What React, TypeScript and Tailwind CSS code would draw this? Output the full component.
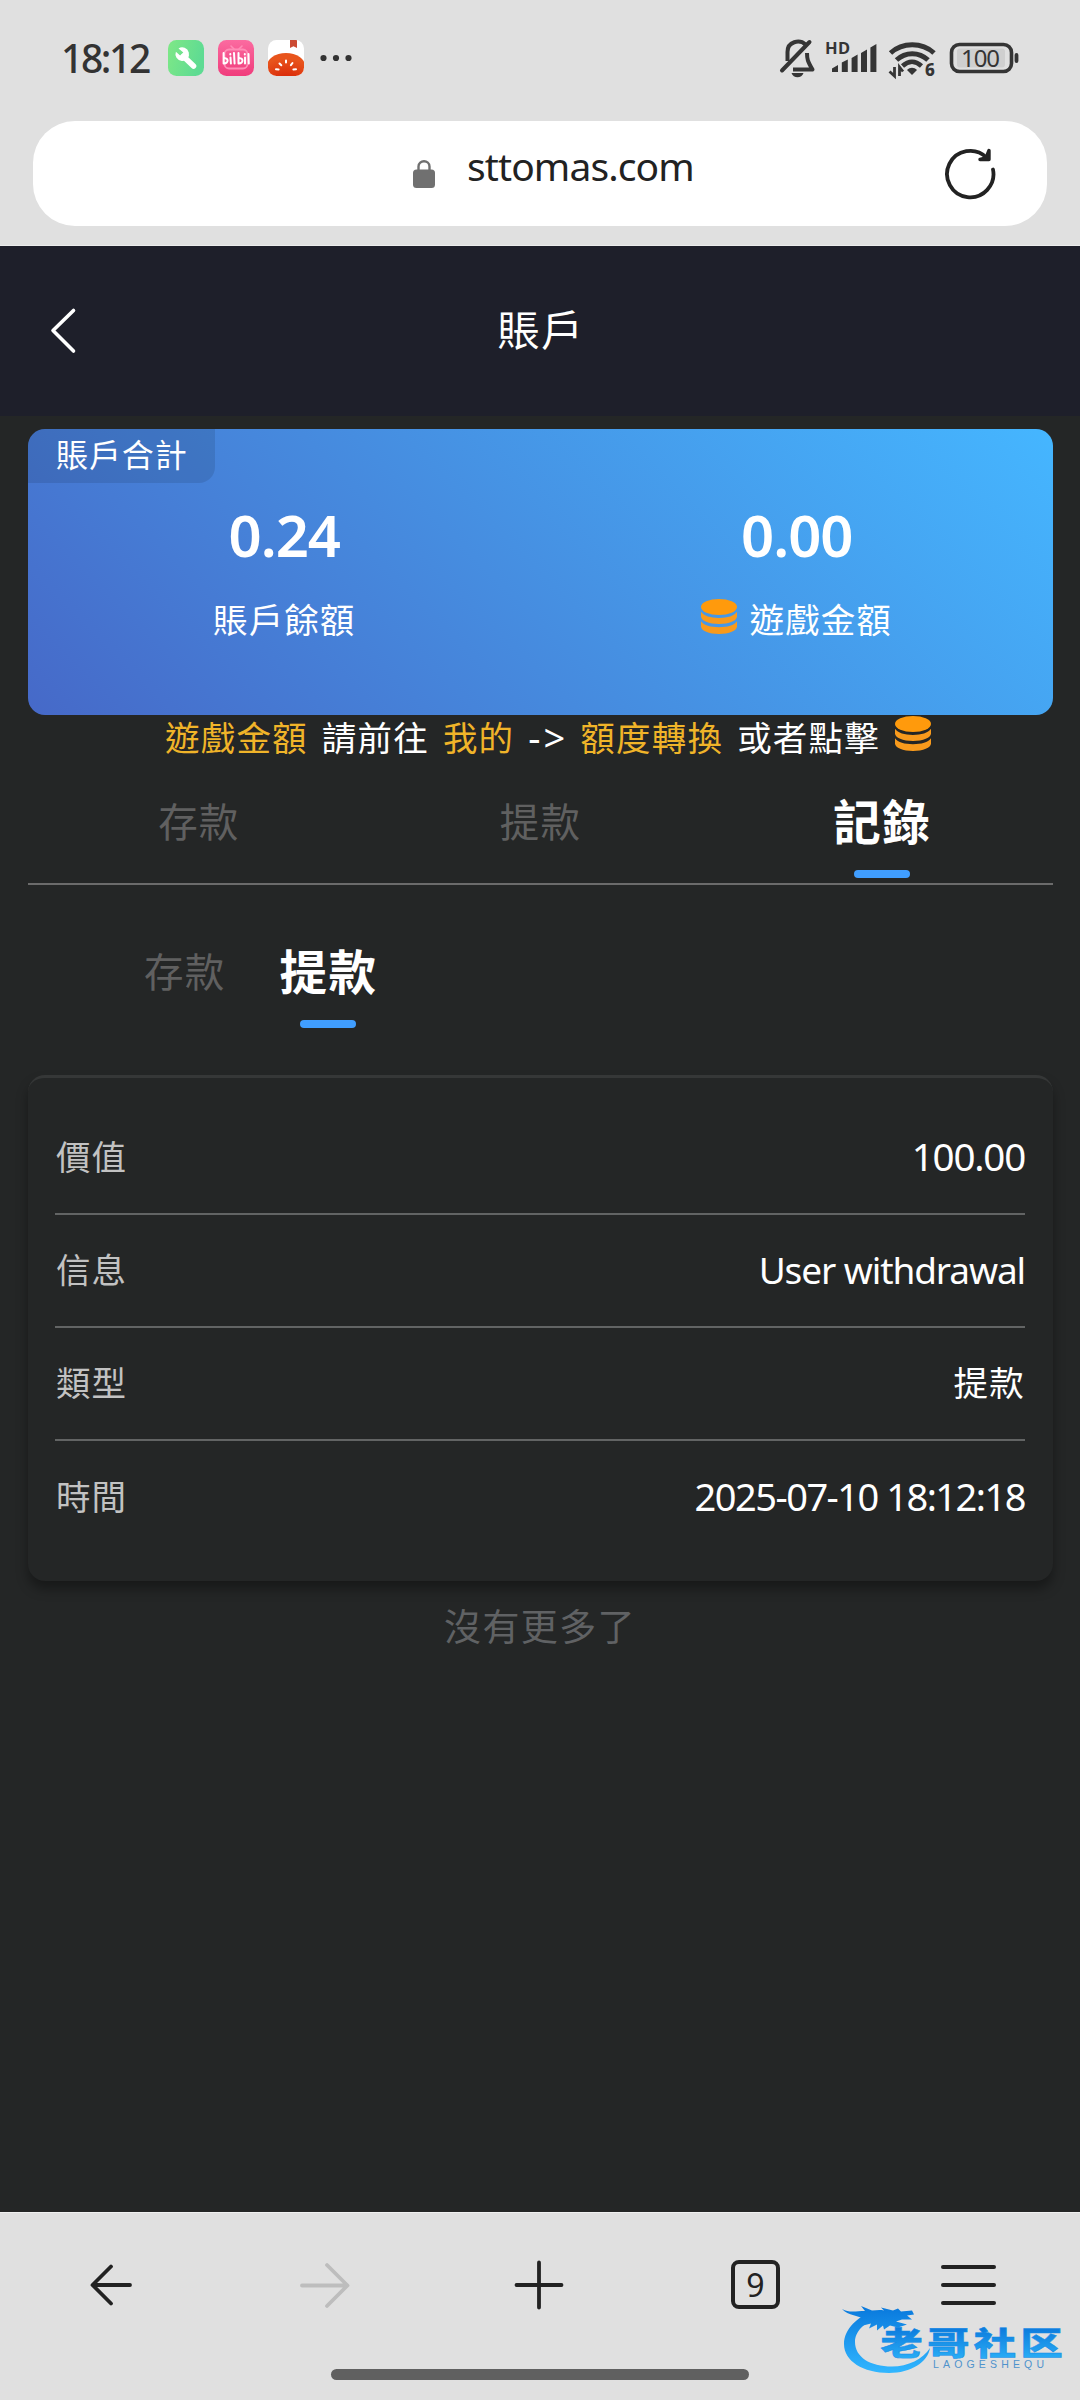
import React from "react";

const records = [
  { label: "價值", value: "100.00", style: "tracking-[-1.2px] text-[38.5px]" },
  { label: "信息", value: "User withdrawal", style: "tracking-[-1.1px] text-[37px]" },
  { label: "類型", value: "提款", style: "tracking-[1.2px] text-[34.5px]" },
  { label: "時間", value: "2025-07-10 18:12:18", style: "tracking-[-1.5px] text-[38px]" },
];

function Coins({ className = "" }: { className?: string }) {
  return (
    <svg className={className} width="38" height="38" viewBox="0 0 38 38" fill="#ff9a0c">
      <ellipse cx="19" cy="9" rx="18" ry="8" />
      <path d="M1 13.800c3 4.200 9.500 6.200 18 6.200s15-2 18-6.200v4.700c0 4.200-8 7.500-18 7.500S1 22.700 1 18.500z" fill="#f89a1c" />
      <path d="M1 23.300c3 4.200 9.500 5.900 18 5.900s15-1.700 18-5.900v5.200c0 4.200-8 7.500-18 7.500S1 32.700 1 28.500z" fill="#f89a1c" />
    </svg>
  );
}

function StatusBar() {
  return (
    <div className="flex h-[121px] items-start pt-[36px] pl-[61px] pr-[61px] text-[#333]">
      <span className="w-[107px] text-[39px] leading-[44px] font-medium tracking-[-2.400px] whitespace-nowrap">18:12</span>
      <svg className="mt-[4px] shrink-0" width="186" height="36" viewBox="0 0 186 36">
        <defs>
          <linearGradient id="green" x1="0" x2="1" y1="0" y2="0.3">
            <stop offset="0" stopColor="#7fe886" />
            <stop offset="1" stopColor="#5edb93" />
          </linearGradient>
          <linearGradient id="pink" x1="0" x2="0" y1="0" y2="1">
            <stop offset="0" stopColor="#fb6ba0" />
            <stop offset="1" stopColor="#f03c7c" />
          </linearGradient>
          <radialGradient id="tomato" cx="0.5" cy="1" r="0.8">
            <stop offset="0" stopColor="#d62005" />
            <stop offset="1" stopColor="#e8541c" />
          </radialGradient>
          <clipPath id="tomatoClip">
            <rect x="100" width="36" height="36" rx="8.500" />
          </clipPath>
        </defs>
        <rect width="36" height="36" rx="8.500" fill="url(#green)" />
        <path d="M15.500 16.500 25.500 26" stroke="#fff" strokeWidth="5.600" strokeLinecap="round" />
        <path d="M10.500 8.500a6.800 6.800 0 1 1-2.600 3.200l4.200 3.800 3.200-3z" fill="#fff" />
        <rect x="50" width="36" height="36" rx="8.500" fill="url(#pink)" />
        <rect x="56.500" y="9.500" width="23" height="19" rx="4.500" fill="none" stroke="#ff8db6" strokeWidth="1.800" />
        <path d="m63 6 3 3m8-3-3 3" stroke="#ff8db6" strokeWidth="1.600" strokeLinecap="round" />
        <g stroke="#fff" strokeWidth="2" fill="none" strokeLinecap="round">
          <path d="M55.600 13v10.500M55.600 18.500c5-1.500 5.500 4.800.3 5M62.500 17.500l.4 6M66 13l.6 10.500M70.500 13v10.500M70.500 18.500c5-1.500 5.500 4.800.3 5M77 17.500v6M80.500 14l.3 9.500" />
          <path d="M62.300 14v.4M76.800 14v.4" />
        </g>
        <g clipPath="url(#tomatoClip)">
          <rect x="100" width="36" height="36" fill="#fff" />
          <ellipse cx="118" cy="27" rx="19.500" ry="14" fill="url(#tomato)" />
          <path d="M122 0h7v8l-3.500-1.800L122 8z" fill="#cc4a33" />
          <g stroke="#fff" strokeWidth="2" strokeLinecap="round">
            <path d="m108 29.300 2.600.2M111.500 23.500l1.800 1.800M118 20.500v2M124.500 23l-1.600 2.200M128 29.300l-2.600.2" />
          </g>
        </g>
        <g fill="#333">
          <circle cx="155.500" cy="18" r="3.100" />
          <circle cx="168" cy="18" r="3.100" />
          <circle cx="180.500" cy="18" r="3.100" />
        </g>
      </svg>
      <svg className="mt-[-6px] ml-auto shrink-0" width="240" height="56" viewBox="779 30 240 56" fill="none" stroke="#353535">
        <path d="M782 70.500 809.500 42" strokeWidth="4" strokeLinecap="round" />
        <path d="M787.500 61V52c0-10.500 12-13 18-7.500M807 53c0 6 .5 8 5.500 16.500H793" strokeWidth="4" strokeLinejoin="round" />
        <path d="M791.500 73h12c-1.500 5.600-10.500 5.600-12 0z" fill="#353535" stroke="none" />
        <text x="825" y="54" fontSize="16.500" fontWeight="700" fill="#353535" stroke="none" textLength="25">HD</text>
        <path d="M832 72v-3.500l6-3.500V72zM841.800 72V62.500l6-3V72zM851.600 72V58l6-3.500V72zM861 72V53l6-3.500V72zM870.400 72V47.500l6-3.500V72z" fill="#353535" stroke="none" />
        <path d="M890.500 53c12-11 31.500-11 43.500 0" strokeWidth="5" />
        <path d="M896.500 60c9-8.500 22.500-8.500 31.500 0" strokeWidth="5" />
        <path d="M902.500 66c6-5.500 13-5.500 19 0" strokeWidth="4.600" />
        <path d="M907 70c3-3 7-3 10 0l-5 5z" fill="#353535" stroke="none" />
        <path d="M894.500 67v9l-5-4.500M899.500 76v-9l3.500 4.500" strokeWidth="2.800" />
        <text x="925" y="75.500" fontSize="17" fontWeight="800" fill="#353535" stroke="none">6</text>
        <rect x="951.500" y="44.500" width="60" height="27" rx="8" strokeWidth="3.600" />
        <rect x="957" y="48.500" width="48" height="19" rx="3" fill="#cfcfcf" stroke="none" />
        <path d="M1016.500 55v6" strokeWidth="3.800" strokeLinecap="round" />
        <text x="961" y="67" fontSize="24" fill="#353535" stroke="none" textLength="39">100</text>
      </svg>
    </div>
  );
}

function AddressBar() {
  return (
    <div className="flex h-[125px] flex-col border-b border-[#ececec] px-[33px]">
      <div className="flex h-[105px] items-start rounded-[42px] bg-white pl-[380px] pr-[50px]">
        <svg className="mt-[38px] shrink-0" width="22" height="30" viewBox="0 0 22 30">
          <rect y="10.500" width="22" height="18.500" rx="3.500" fill="#707070" />
          <path d="M5.500 12V7.500c0-7 11-7 11 0V12" fill="none" stroke="#707070" strokeWidth="2.400" />
        </svg>
        <span className="mt-[19px] ml-[32px] text-[39px] leading-[52px] tracking-[-0.900px] text-[#222]">sttomas.com</span>
        <svg className="mt-[25px] ml-auto" width="54" height="54" viewBox="0 0 54 54" fill="none" stroke="#222">
          <path d="M43.500 11.500A23.200 23.200 0 1 0 50 23.500" strokeWidth="3.800" strokeLinecap="round" />
          <path d="M46 4.500V13.500H37L43 12z" fill="#222" strokeWidth="3.400" strokeLinecap="round" strokeLinejoin="round" />
        </svg>
      </div>
    </div>
  );
}

function BalanceCard() {
  return (
    <section className="relative mr-[27px] ml-[28px] mt-[13px] grid h-[286px] grid-cols-2 overflow-hidden rounded-[17px] bg-[linear-gradient(45deg,#4669c8_0%,#4690e2_50%,#45b6ff_100%)] text-white">
      <div className="absolute top-0 left-0 h-[54px] w-[187px] rounded-br-[16px] bg-black/10 pl-[28px] text-[32px] leading-[52px] tracking-[0.900px]">賬戶合計</div>
      <div className="flex flex-col items-center pt-[75px]">
        <span className="text-[58px] leading-[62px] font-semibold tracking-[-1px]">0.24</span>
        <span className="mt-[29px] text-[34.500px] leading-[50px] tracking-[1.100px]">賬戶餘額</span>
      </div>
      <div className="flex flex-col items-center pt-[75px]">
        <span className="text-[58px] leading-[62px] font-semibold tracking-[-1px]">0.00</span>
        <span className="mt-[29px] flex items-start gap-[12px] pr-[2px] text-[34.500px] leading-[50px] tracking-[1.100px]">
          <Coins className="mt-[3px]" />
          遊戲金額
        </span>
      </div>
    </section>
  );
}

function Tab({ text, active = false }: { text: string; active?: boolean }) {
  return (
    <div className="flex flex-col items-center">
      <span className={active ? "h-[85px] text-[47.500px] leading-[74px] font-bold tracking-[1.500px] text-white" : "h-[85px] text-[39.500px] leading-[74px] tracking-[1.200px] text-[#606060]"}>{text}</span>
      {active && <span className="h-[8px] w-[56px] rounded-full bg-[#409eff]" />}
    </div>
  );
}

function Watermark() {
  return (
    <svg className="absolute right-[14px] bottom-[22px]" width="226" height="76" viewBox="0 0 226 76">
      <defs>
        <linearGradient id="brand" gradientUnits="userSpaceOnUse" x1="0" y1="4" x2="0" y2="70">
          <stop offset="0" stopColor="#0878dc" />
          <stop offset="1" stopColor="#31b6ff" />
        </linearGradient>
        <linearGradient id="brandText" x1="0" y1="0" x2="0" y2="1">
          <stop offset="0.200" stopColor="#0c79dc" />
          <stop offset="0.900" stopColor="#2aaef6" />
        </linearGradient>
      </defs>
      <path d="M34 9C18 14 4 27 4 42c0 17 19 29 45 29C71 71 88 60 90 46c-7 11-22 18.500-38 18.500-22 0-37-9.500-37-24.500C15 29 25 20 37 17z" fill="url(#brand)" />
      <path d="M2 7c7 4 14 2 23 2l-4-5 11 4.500c4 0 7-1 12 0l-3-3 12 3 5-2 3 3 11-1 2 4-7 1 5 4-10 0-6 2 11 3-9 3-8-2-6 4-1-4-6 5 0-6-8 4 2-5-8 2 3-5C19 13 8 14 2 7z" fill="url(#brand)" />
      <text transform="translate(40.500 52.500) scale(1.320 1)" x="0" y="0" fontSize="32" fontWeight="900" textLength="138" fill="url(#brandText)" stroke="#148be6" strokeWidth="0.500" className="font-['Noto_Sans_CJK_SC',sans-serif]">老哥社区</text>
      <text x="93" y="66" fontSize="10.500" textLength="111" fill="#4f93cc" className="font-['Liberation_Sans',sans-serif]">LAOGESHEQU</text>
    </svg>
  );
}

function BottomBar() {
  return (
    <footer className="relative flex h-[188px] flex-col items-center border-t border-[#f0f0f0] bg-[#e0e0e0]">
      <div className="flex h-[143px] w-full items-center justify-between pl-[86px] pr-[84px]">
        <svg width="50" height="50" viewBox="0 0 50 50" fill="none" stroke="#222" strokeWidth="3.800" strokeLinecap="round" strokeLinejoin="round">
          <path d="M44 25H7M25 6.500 6.500 25 25 43.500" />
        </svg>
        <svg width="50" height="50" viewBox="0 0 50 50" fill="none" stroke="#bdbdbd" strokeWidth="3.800" strokeLinecap="round" strokeLinejoin="round">
          <path d="M2 25.500H47M27 5 47.500 25.500 27 46" />
        </svg>
        <svg width="50" height="50" viewBox="0 0 50 50" fill="none" stroke="#222" strokeWidth="3.800" strokeLinecap="round">
          <path d="M25 2.500v45M2.500 25h45" />
        </svg>
        <div className="mr-[-3px] ml-[3px] flex h-[49px] w-[49px] items-center justify-center rounded-[8px] border-4 border-[#222] text-[32px] leading-none text-[#222]">9</div>
        <div className="flex h-[40px] w-[55px] flex-col justify-between">
          <span className="h-[4px] rounded-full bg-[#222]" />
          <span className="h-[4px] rounded-full bg-[#222]" />
          <span className="h-[4px] rounded-full bg-[#222]" />
        </div>
      </div>
      <div className="mt-[13px] h-[11px] w-[418px] rounded-full bg-[#606060]" />
      <Watermark />
    </footer>
  );
}

export default function App() {
  return (
    <div className="flex h-[2400px] w-[1080px] flex-col overflow-hidden bg-[#e0e0e0] font-['Noto_Sans','Noto_Sans_CJK_TC',sans-serif]">
      <StatusBar />
      <AddressBar />
      <main className="flex grow flex-col bg-[#242626]">
        <header className="grid h-[170px] grid-cols-[1fr_auto_1fr] items-center bg-[#1e1f2a] text-white">
          <svg className="ml-[47px]" width="32" height="48" viewBox="0 0 32 48" fill="none" stroke="#fff" strokeWidth="3.600" strokeLinecap="round" strokeLinejoin="round">
            <path d="M26.500 3.500 6 23.500l20.500 20.500" />
          </svg>
          <h1 className="mt-[-3px] pl-[2px] text-[42px] leading-[60px] tracking-[1.500px]">賬戶</h1>
          <span />
        </header>
        <BalanceCard />
        <p className="flex h-[50px] items-start gap-[14px] pl-[165px] text-[34.500px] leading-[45px] tracking-[1.200px] whitespace-nowrap text-white">
          <span className="text-[#f0b429]">遊戲金額</span>
          <span>請前往</span>
          <span className="text-[#f0b429]">我的</span>
          <span className="w-[38px] text-[38px] tracking-[3px]">-&gt;</span>
          <span className="text-[#f0b429]">額度轉換</span>
          <span>或者點擊</span>
          <Coins />
        </p>
        <nav className="mr-[27px] ml-[28px] mt-[20px] grid h-[100px] grid-cols-3 border-b-2 border-[#6b6b6b]">
          <Tab text="存款" />
          <Tab text="提款" />
          <Tab text="記錄" active />
        </nav>
        <nav className="mt-[50px] flex h-[93px] gap-[54px] pl-[144px]">
          <Tab text="存款" />
          <Tab text="提款" active />
        </nav>
        <section className="mr-[27px] ml-[28px] mt-[47px] h-[506px] rounded-[17px] border-t-[3px] border-[#353737] bg-[#242626] pr-[28px] pl-[27px] pt-[24px] shadow-[0_8px_12px_rgba(0,0,0,0.35)]">
          {records.map((record) => (
            <div key={record.label} className="flex h-[113px] items-center justify-between border-b-2 border-[#626464] last:border-b-0">
              <span className="mt-[-2px] pl-[1px] text-[34.500px] tracking-[1.100px] text-[#c2c2c2]">{record.label}</span>
              <span className={`mt-[-2px] text-white ${record.style}`}>{record.value}</span>
            </div>
          ))}
        </section>
        <p className="mt-[19px] text-center text-[37px] leading-[54px] tracking-[1.400px] text-[#606264]">沒有更多了</p>
      </main>
      <BottomBar />
    </div>
  );
}
